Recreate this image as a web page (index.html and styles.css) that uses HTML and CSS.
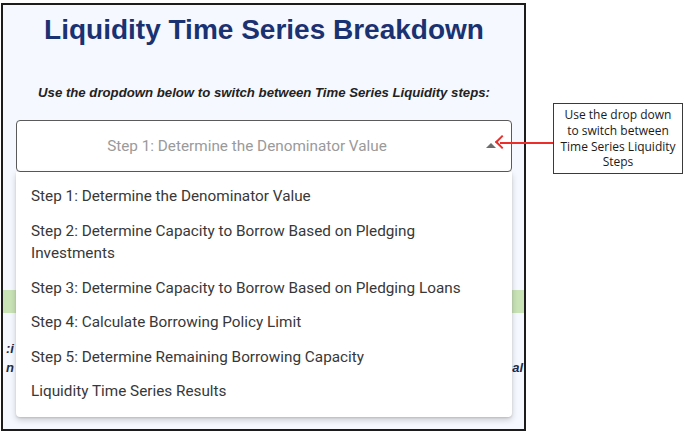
FILE: index.html
```html
<!DOCTYPE html>
<html lang="en">
<head>
    <meta charset="UTF-8">
    <title>Liquidity Time Series Breakdown</title>
    <link rel="stylesheet" href="styles.css">
</head>
<body>
    <div class="page">
        <div class="frame">
            <h1 class="title">Liquidity Time Series Breakdown</h1>
            <p class="hint">Use the dropdown below to switch between Time Series Liquidity steps:</p>

            <div class="picker">
                <div class="select">
                    <span class="select-value">Step 1: Determine the Denominator Value</span>
                    <span class="caret"></span>
                </div>
                <ul class="menu">
                    <li>Step 1: Determine the Denominator Value</li>
                    <li>Step 2: Determine Capacity to Borrow Based on Pledging Investments</li>
                    <li>Step 3: Determine Capacity to Borrow Based on Pledging Loans</li>
                    <li>Step 4: Calculate Borrowing Policy Limit</li>
                    <li>Step 5: Determine Remaining Borrowing Capacity</li>
                    <li>Liquidity Time Series Results</li>
                </ul>
            </div>

            <div class="band"></div>
            <div class="note">
                <div class="note-line"><span>:i</span><span></span></div>
                <div class="note-line"><span>n</span><span>cal</span></div>
            </div>
        </div>

        <div class="side">
            <div class="callout">Use the drop down<br>to switch between<br>Time Series Liquidity<br>Steps</div>
        </div>

        <div class="pointer"></div>
    </div>
</body>
</html>
```

FILE: styles.css
```css
*
{
    margin: 0;
    padding: 0;
    box-sizing: border-box;
}
body
{
    background-color: white;
    font-family: "Liberation Sans", Arial, sans-serif;
}
.page
{
    position: relative;
    display: flex;
    flex-direction: row;
    align-items: flex-start;
    width: 688px;
    height: 433px;
    padding: 3px 0 0 1px;
}
.frame
{
    width: 525px;
    height: 428px;
    border: 2px solid #1c1c1c;
    background-color: #f5f8fe;
    padding: 0 12px 0 13px;
    overflow: hidden;
    flex-shrink: 0;
}
.title
{
    margin-top: 8px;
    text-align: center;
    font-size: 28px;
    line-height: 34px;
    font-weight: bold;
    color: #1b3272;
}
.hint
{
    margin-top: 38px;
    text-align: center;
    font-size: 13.2px;
    line-height: 16px;
    font-weight: bold;
    font-style: italic;
    color: #222;
}
.picker
{
    position: relative;
    margin-top: 19px;
}
.select
{
    height: 52px;
    border: 1px solid #5a5a5a;
    border-radius: 4px;
    background-color: white;
    display: flex;
    align-items: center;
    padding: 0 15px 0 0;
    font-family: Roboto, "Liberation Sans", sans-serif;
    font-size: 15.3px;
    color: #9a9a9a;
}
.select-value
{
    flex: 1;
    text-align: center;
}
.caret
{
    width: 0;
    height: 0;
    margin-left: 9px;
    margin-top: -2px;
    border-left: 5px solid transparent;
    border-right: 5px solid transparent;
    border-bottom: 5px solid #6d6d6d;
}
.menu
{
    position: absolute;
    left: 0;
    right: 0;
    top: 52px;
    list-style: none;
    background-color: white;
    border-radius: 0 0 4px 4px;
    box-shadow: 0 3px 6px rgba(0, 0, 0, 0.18), 0 1px 2px rgba(0, 0, 0, 0.12);
    padding: 7px 0 8px 0;
    font-family: Roboto, "Liberation Sans", sans-serif;
    font-size: 15.3px;
    line-height: 22.5px;
    color: #383838;
    z-index: 2;
}
.menu li
{
    padding: 6px 40px 6px 15px;
}
.band
{
    margin: 118px -12px 0 -13px;
    height: 23px;
    background-color: #c9e2b6;
}
.note
{
    margin: 26px -12px 0 -13px;
    font-size: 13px;
    line-height: 19px;
    font-weight: bold;
    font-style: italic;
    color: #1e2a4a;
}
.note-line
{
    display: flex;
    justify-content: space-between;
    padding: 0 1px 0 3px;
}
.side
{
    padding: 100px 0 0 27px;
}
.callout
{
    width: 130px;
    height: 71px;
    border: 1px solid #3a3a3a;
    background-color: white;
    display: flex;
    align-items: center;
    justify-content: center;
    text-align: center;
    font-family: "Open Sans", sans-serif;
    font-size: 12px;
    line-height: 15.7px;
    color: #1a1a1a;
    white-space: nowrap;
}
.pointer
{
    position: absolute;
    left: 500px;
    top: 142px;
    width: 53px;
    height: 2px;
    background-color: #ea2f2a;
}
.pointer::before
{
    content: "";
    position: absolute;
    left: -3px;
    top: -5px;
    width: 8px;
    height: 8px;
    border-left: 2px solid #ea2f2a;
    border-bottom: 2px solid #ea2f2a;
    transform: rotate(45deg);
}
```
